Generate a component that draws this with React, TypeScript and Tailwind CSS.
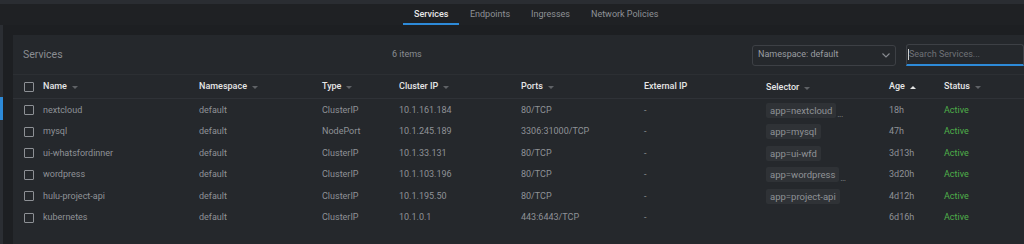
import React from "react";

const rows = [
  { name: "nextcloud", ns: "default", type: "ClusterIP", ip: "10.1.161.184", ports: "80/TCP", sel: "app=nextcloud", more: true, age: "18h" },
  { name: "mysql", ns: "default", type: "NodePort", ip: "10.1.245.189", ports: "3306:31000/TCP", sel: "app=mysql", more: false, age: "47h" },
  { name: "ui-whatsfordinner", ns: "default", type: "ClusterIP", ip: "10.1.33.131", ports: "80/TCP", sel: "app=ui-wfd", more: false, age: "3d13h" },
  { name: "wordpress", ns: "default", type: "ClusterIP", ip: "10.1.103.196", ports: "80/TCP", sel: "app=wordpress", more: true, age: "3d20h" },
  { name: "hulu-project-api", ns: "default", type: "ClusterIP", ip: "10.1.195.50", ports: "80/TCP", sel: "app=project-api", more: false, age: "4d12h" },
  { name: "kubernetes", ns: "default", type: "ClusterIP", ip: "10.1.0.1", ports: "443:6443/TCP", sel: "", more: false, age: "6d16h" },
];

const cols = "grid grid-cols-[19px_156px_123px_77px_122px_123px_122px_123px_55px_1fr] items-center";

const Caret = ({ up = false }: { up?: boolean }) => (
  <svg width="6" height="3" viewBox="0 0 6 3" className={`ml-[5px] inline-block ${up ? "" : "opacity-50"}`}>
    {up ? <path d="M0 3 L3 0 L6 3 Z" fill="#e6e6e6" /> : <path d="M0 0 L3 3 L6 0 Z" fill="#9a9da1" />}
  </svg>
);

const Box = () => <div className="h-[10px] w-[10px] rounded-[1px] border border-[#8d9095]" />;

export default function App() {
  return (
    <div className="h-[244px] w-[1024px] overflow-hidden bg-[#1d1f22] font-['Roboto',sans-serif] text-[9px]">
      <div className="h-[4px] bg-[#2a2d32]" />
      <div className="flex h-[21px] items-stretch bg-[#1f2124] pl-[403px]">
        <div className="flex">
          <div className="flex items-center border-b-2 border-[#2d8ad8] px-[11px] pt-[2px] font-medium text-[#e8e8e8]">Services</div>
          <div className="flex items-center px-[10.5px] text-[#8e9196]">Endpoints</div>
          <div className="flex items-center px-[10.5px] text-[#8e9196]">Ingresses</div>
          <div className="flex items-center px-[10.5px] text-[#8e9196]">Network Policies</div>
        </div>
      </div>
      <div className="flex">
        <div className="flex w-[3px] flex-col bg-[#2b2e33]">
          <div className="h-[72px]" />
          <div className="h-[23px] bg-[#2d8ad8]" />
          <div className="h-[150px]" />
        </div>
        <div className="flex-1 pl-[10px] pt-[10px]">
          <div className="h-[230px] bg-[#25282c]">
            <div className="flex h-[40px] items-center border-b border-[#2c2f33] pl-[10px] pt-[1px]">
              <div className="w-[369px] text-[10.5px] text-[#8a8d92]">Services</div>
              <div className="w-[360px] text-[#8a8d92]">6 items</div>
              <div className="flex h-[21px] w-[144px] items-center justify-between rounded-[3px] border border-[#3d4045] px-[5px] text-[#9a9da1]">
                <span>Namespace: default</span>
                <svg width="8" height="5" viewBox="0 0 8 5"><path d="M0.5 0.5 L4 4 L7.5 0.5" fill="none" stroke="#8a8d92" strokeWidth="1.1" /></svg>
              </div>
              <div className="ml-[10px] flex h-[22px] flex-1 items-center rounded-t-[3px] border border-b-2 border-[#3d4045] border-b-[#2d8ad8] px-[1px] text-[#6f7277]">
                <span className="h-[11px] w-px bg-[#cfcfcf]" />
                <span>Search Services...</span>
              </div>
            </div>
            <div className={`${cols} h-[24px] border-b border-[#2f3237] pl-[11px] pt-[1px] font-medium text-[#e6e6e6]`}>
              <Box />
              <div className="flex items-center">Name<Caret /></div>
              <div className="flex items-center">Namespace<Caret /></div>
              <div className="flex items-center">Type<Caret /></div>
              <div className="flex items-center">Cluster IP<Caret /></div>
              <div className="flex items-center">Ports<Caret /></div>
              <div>External IP</div>
              <div className="flex items-center pt-[2px]">Selector<Caret /></div>
              <div className="flex items-center">Age<Caret up /></div>
              <div className="flex items-center">Status<Caret /></div>
            </div>
            {rows.map((r) => (
              <div key={r.name} className={`${cols} h-[21.5px] pl-[11px] pt-[1px] text-[#8f9297]`}>
                <Box />
                <div>{r.name}</div>
                <div>{r.ns}</div>
                <div>{r.type}</div>
                <div>{r.ip}</div>
                <div>{r.ports}</div>
                <div>-</div>
                <div className="flex items-end">
                  {r.sel && <span className="rounded-[2px] bg-[#2f3236] px-[4px] py-[2px] text-[9.5px] leading-[11px]">{r.sel}</span>}
                  {r.more && <span className="ml-[1px] text-[7px] leading-[6px] text-[#a4a7ab]">...</span>}
                </div>
                <div>{r.age}</div>
                <div className="text-[#4fae4a]">Active</div>
              </div>
            ))}
          </div>
        </div>
      </div>
    </div>
  );
}
